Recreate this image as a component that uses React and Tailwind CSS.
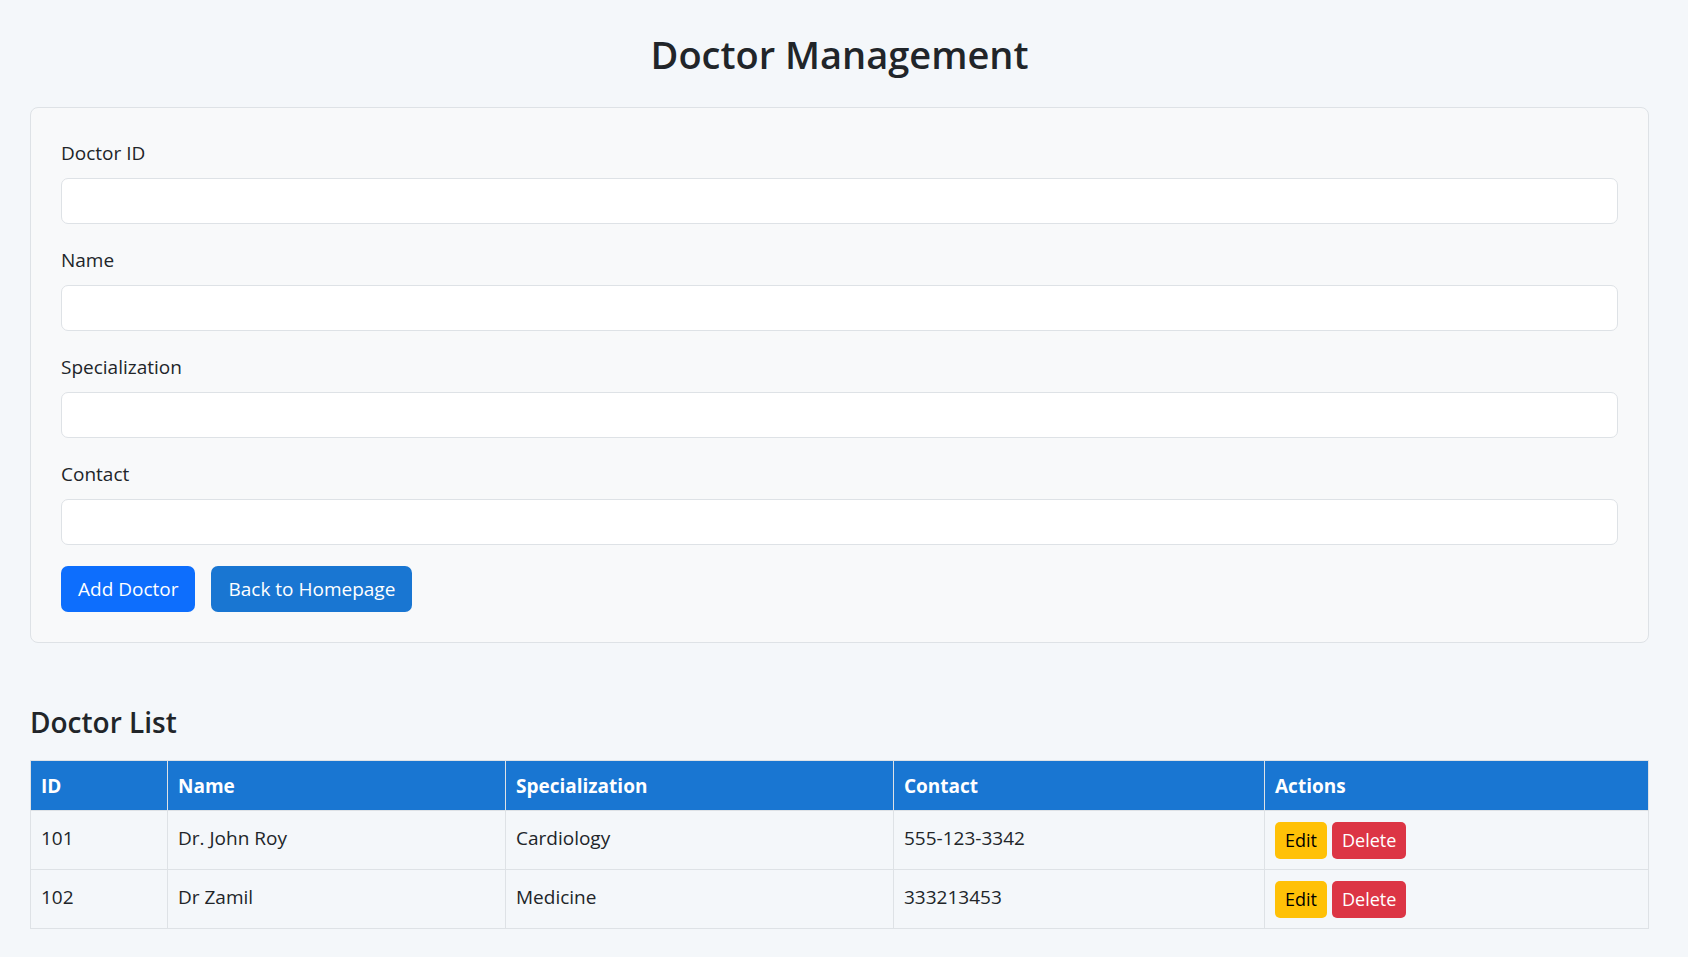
import React from "react";

const doctors = [
  { id: 101, name: "Dr. John Roy", specialization: "Cardiology", contact: "555-123-3342" },
  { id: 102, name: "Dr Zamil", specialization: "Medicine", contact: "333213453" },
];

const fields = ["Doctor ID", "Name", "Specialization", "Contact"];

function Field({ label }) {
  return (
    <div className="mb-[21px]">
      <label className="block text-[19px] leading-[30px] mb-[10px] text-[#212529]">{label}</label>
      <input
        type="text"
        className="block w-full h-[46px] bg-white border border-[#dee2e6] rounded-[7px] px-[14px] text-[19px] outline-none"
      />
    </div>
  );
}

export default function App() {
  return (
    <div
      className="min-h-[957px] bg-[#f4f7fa] pt-[30px] pl-[30px] pr-[39px] pb-[30px] text-[#212529]"
      style={{ fontFamily: '"Open Sans", "Noto Sans", sans-serif' }}
    >
      <h1 className="text-center text-[38px] leading-[48px] font-semibold">Doctor Management</h1>

      <div className="mt-[29px] bg-[#f8f9fa] border border-[#dee2e6] rounded-[8px] p-[30px]">
        {fields.map((f) => (
          <Field key={f} label={f} />
        ))}
        <div className="flex gap-[16px]">
          <button className="h-[46px] px-[17px] rounded-[7px] bg-[#0d6efd] text-white text-[19px]">Add Doctor</button>
          <button className="h-[46px] px-[17px] rounded-[7px] bg-[#1976d2] text-white text-[19px]">Back to Homepage</button>
        </div>
      </div>

      <h3 className="mt-[62px] text-[28px] leading-[35px] font-semibold">Doctor List</h3>

      <table className="mt-[20px] w-full border-collapse border border-[#dee2e6] text-[19px]">
        <thead>
          <tr className="h-[50px]">
            <th className="w-[137px] bg-[#1976d2] text-white font-bold text-left px-[10px] border border-[#dee2e6] leading-[28px]">ID</th>
            <th className="w-[338px] bg-[#1976d2] text-white font-bold text-left px-[10px] border border-[#dee2e6] leading-[28px]">Name</th>
            <th className="w-[388px] bg-[#1976d2] text-white font-bold text-left px-[10px] border border-[#dee2e6] leading-[28px]">Specialization</th>
            <th className="w-[371px] bg-[#1976d2] text-white font-bold text-left px-[10px] border border-[#dee2e6] leading-[28px]">Contact</th>
            <th className="bg-[#1976d2] text-white font-bold text-left px-[10px] border border-[#dee2e6] leading-[28px]">Actions</th>
          </tr>
        </thead>
        <tbody>
          {doctors.map((d) => (
            <tr key={d.id} className="h-[59px]">
              <td className="align-middle px-[10px] pb-[5px] border border-[#dee2e6] leading-[28px]">{d.id}</td>
              <td className="align-middle px-[10px] pb-[5px] border border-[#dee2e6] leading-[28px]">{d.name}</td>
              <td className="align-middle px-[10px] pb-[5px] border border-[#dee2e6] leading-[28px]">{d.specialization}</td>
              <td className="align-middle px-[10px] pb-[5px] border border-[#dee2e6] leading-[28px]">{d.contact}</td>
              <td className="align-middle px-[10px] border border-[#dee2e6]">
                <div className="flex gap-[5px]">
                  <button className="h-[37px] px-[10px] rounded-[5px] bg-[#ffc107] text-[#000] text-[18px]">Edit</button>
                  <button className="h-[37px] px-[10px] rounded-[5px] bg-[#dc3545] text-white text-[18px]">Delete</button>
                </div>
              </td>
            </tr>
          ))}
        </tbody>
      </table>
    </div>
  );
}
